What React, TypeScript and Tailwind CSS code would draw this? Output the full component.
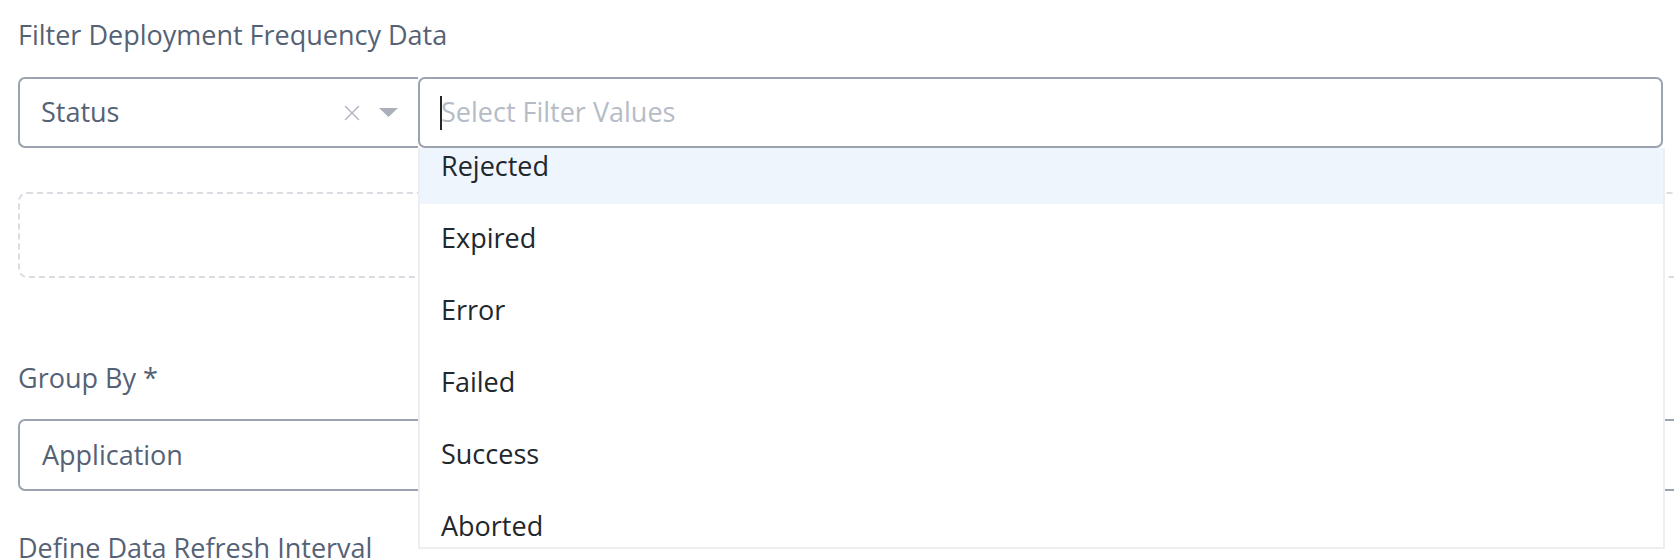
import { X } from "lucide-react";

const options = ["Rejected", "Expired", "Error", "Failed", "Success", "Aborted"];

function Caret() {
  return (
    <svg width="19" height="9" viewBox="0 0 19 9" className="shrink-0">
      <path d="M0 0 L19 0 L9.5 9 Z" fill="#a9b0bb" />
    </svg>
  );
}

export default function App() {
  return (
    <div
      className="relative h-[558px] w-[1674px] overflow-hidden bg-white pl-[18px]"
      style={{ fontFamily: "'Open Sans', 'Noto Sans', sans-serif" }}
    >
      <div className="pt-[20px] text-[27px] leading-[30px] text-[#556275]">
        Filter Deployment Frequency Data
      </div>

      {/* filter row */}
      <div className="relative mt-[27px] flex h-[71px] w-[1645px]">
        <div className="flex w-[400px] items-center rounded-l-[7px] border-y-2 border-l-2 border-[#9ba3b1] pl-[21px] pr-[20px]">
          <span className="flex-1 text-[27px] text-[#556275]">Status</span>
          <X size={26} strokeWidth={1.5} color="#b4bac4" className="mr-[14px]" />
          <Caret />
        </div>
        <div className="relative flex flex-1 items-center rounded-[7px] border-2 border-[#9ba3b1] pl-[20px]">
          <span className="mr-[-1px] h-[34px] w-[2px] bg-[#22272d]" />
          <span className="text-[27px] text-[#b6bcc6]">Select Filter Values</span>
        </div>

        {/* dropdown */}
        <div className="absolute left-[400px] top-[71px] z-10 h-[401px] w-[1247px] overflow-hidden border-x-2 border-b-2 border-[#eceef1] bg-white">
          <div className="mt-[-16px]">
            {options.map((o, i) => (
              <div
                key={o}
                className={
                  "flex h-[72px] items-center pb-[3px] pl-[21px] text-[27px] text-[#22272d] " +
                  (i === 0 ? "bg-[#eef5fd]" : "")
                }
              >
                {o}
              </div>
            ))}
          </div>
        </div>
      </div>

      <div className="mt-[44px] h-[86px] w-[1700px] rounded-[9px] border-2 border-dashed border-[#d9dce1]" />

      <div className="mt-[85px] text-[27px] leading-[30px] text-[#556275]">Group By *</div>

      <div className="mt-[26px] flex h-[72px] w-[1700px] items-center rounded-[7px] border-2 border-[#9ba3b1] pl-[22px]">
        <span className="text-[27px] text-[#556275]">Application</span>
      </div>

      <div className="mt-[42px] text-[27px] leading-[30px] text-[#556275]">
        Define Data Refresh Interval
      </div>
    </div>
  );
}
